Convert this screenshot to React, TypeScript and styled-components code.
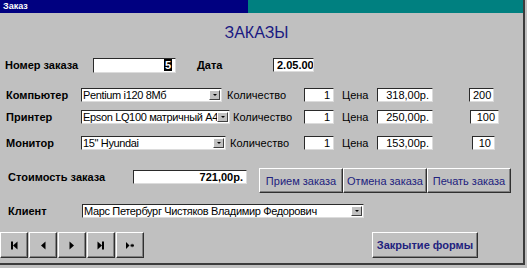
import React from 'react';
import styled, { createGlobalStyle } from 'styled-components';

const GlobalStyle = createGlobalStyle`
  html, body {
    margin: 0;
    padding: 0;
    background: #c0c0c0;
  }
  body {
    font-family: "Liberation Sans", Arial, sans-serif;
    font-size: 11px;
    color: #000;
  }
`;

const Window = styled.div`
  width: 525px;
  height: 265px;
  box-sizing: border-box;
  border-right: 2px solid #3c3c3c;
  border-bottom: 2px solid #3c3c3c;
  background: #c0c0c0;
  display: flex;
  flex-direction: column;
`;

const TitleBar = styled.div`
  height: 13px;
  background: linear-gradient(to right, #000080 0, #000080 248px, #008080 248px);
  color: #fff;
  font-weight: bold;
  font-size: 9px;
  line-height: 13px;
  padding-left: 3px;
`;

const Heading = styled.h1`
  margin: 11px 0 0;
  text-align: center;
  font-size: 16px;
  line-height: 18px;
  font-weight: normal;
  color: #1a1a82;
  padding-right: 10px;
`;

const Row = styled.div<{ $mt: number; $pl: number; $h: number }>`
  display: flex;
  align-items: center;
  margin-top: ${({ $mt }) => $mt}px;
  padding-left: ${({ $pl }) => $pl}px;
  height: ${({ $h }) => $h}px;
`;

const Label = styled.span<{ $w?: number; $ml?: number; $bold?: boolean }>`
  flex: 0 0 auto;
  width: ${({ $w }) => ($w ? `${$w}px` : 'auto')};
  margin-left: ${({ $ml }) => $ml || 0}px;
  font-weight: ${({ $bold }) => ($bold ? 'bold' : 'normal')};
  font-size: 11px;
  line-height: 14px;
  white-space: nowrap;
`;

const Field = styled.div<{ $w: number; $h?: number; $ml?: number; $bold?: boolean }>`
  flex: 0 0 auto;
  box-sizing: border-box;
  width: ${({ $w }) => $w}px;
  height: ${({ $h }) => $h || 14}px;
  margin-left: ${({ $ml }) => $ml || 0}px;
  background: #fff;
  border: 1px solid;
  border-color: #2a2a2a #dcdcdc #dcdcdc #2a2a2a;
  font-size: 11px;
  font-weight: ${({ $bold }) => ($bold ? 'bold' : 'normal')};
  line-height: ${({ $h }) => ($h || 14) - 2}px;
  text-align: right;
  padding: 0 3px;
  white-space: nowrap;
  overflow: hidden;
`;

const Caret = styled.span`
  background: #000;
  color: #fff;
  font-weight: bold;
  padding: 0 1px;
`;

const ComboCell = styled.div`
  flex: 0 0 223px;
  display: flex;
  align-items: center;
`;

const Combo = styled.div<{ $w: number }>`
  flex: 0 0 auto;
  box-sizing: border-box;
  width: ${({ $w }) => $w}px;
  height: 14px;
  background: #fff;
  border: 1px solid;
  border-color: #2a2a2a #dcdcdc #dcdcdc #2a2a2a;
  display: flex;
  align-items: center;
  padding-left: 1px;
`;

const ComboText = styled.span`
  flex: 1;
  min-width: 0;
  font-size: 11px;
  line-height: 12px;
  letter-spacing: -0.35px;
  white-space: nowrap;
  overflow: hidden;
`;

const DropButton = styled.span`
  flex: 0 0 11px;
  height: 10px;
  margin-right: 1px;
  box-sizing: border-box;
  background: #c0c0c0;
  border: 1px solid;
  border-color: #fff #404040 #404040 #fff;
  display: flex;
  align-items: center;
  justify-content: center;
`;

const Arrow = styled.span`
  width: 0;
  height: 0;
  border-left: 2px solid transparent;
  border-right: 2px solid transparent;
  border-top: 2px solid #000;
`;

const Button = styled.button<{ $w: number; $h: number; $bold?: boolean }>`
  flex: 0 0 auto;
  width: ${({ $w }) => $w}px;
  height: ${({ $h }) => $h}px;
  padding: 0;
  background: #c0c0c0;
  border: 1px solid;
  border-color: #fff #303030 #303030 #fff;
  box-shadow: inset -1px -1px #808080;
  font-family: "Liberation Sans", Arial, sans-serif;
  font-size: 11px;
  font-weight: ${({ $bold }) => ($bold ? 'bold' : 'normal')};
  color: #22227e;
  cursor: pointer;
  white-space: nowrap;
`;

const ButtonGroup = styled.div<{ $ml: number; $gap?: number }>`
  display: flex;
  margin-left: ${({ $ml }) => $ml}px;
  gap: ${({ $gap }) => $gap || 0}px;
`;

const CostBlock = styled.div`
  display: flex;
  align-self: flex-start;
  align-items: center;
  margin-top: 2px;
`;

const NavButton = styled.button`
  width: 28px;
  height: 26px;
  padding: 0;
  background: #c0c0c0;
  border: 1px solid;
  border-color: #fff #303030 #303030 #fff;
  box-shadow: inset -1px -1px #808080;
  display: flex;
  align-items: center;
  justify-content: center;
  cursor: pointer;
`;

type NavKind = 'first' | 'prev' | 'next' | 'last' | 'new';

const NavIcon: React.FC<{ kind: NavKind }> = ({ kind }) => {
  if (kind === 'first')
    return (
      <svg width="8" height="9" viewBox="0 0 8 9">
        <rect x="1" y="0.5" width="2" height="8" fill="#000" />
        <polygon points="7.5,0.5 3,4.5 7.5,8.5" fill="#000" />
      </svg>
    );
  if (kind === 'prev')
    return (
      <svg width="8" height="9" viewBox="0 0 8 9">
        <polygon points="6.5,0.5 2,4.5 6.5,8.5" fill="#000" />
      </svg>
    );
  if (kind === 'next')
    return (
      <svg width="8" height="9" viewBox="0 0 8 9">
        <polygon points="1.5,0.5 6,4.5 1.5,8.5" fill="#000" />
      </svg>
    );
  if (kind === 'last')
    return (
      <svg width="8" height="9" viewBox="0 0 8 9">
        <polygon points="0.5,0.5 5,4.5 0.5,8.5" fill="#000" />
        <rect x="5" y="0.5" width="2" height="8" fill="#000" />
      </svg>
    );
  return (
    <svg width="10" height="9" viewBox="0 0 10 9">
      <polygon points="1,1 4.5,4.5 1,8" fill="#000" />
      <path d="M5.5 4.5h3.5M7.2 2.8v3.4M6 3.3l2.4 2.4M8.4 3.3L6 5.7" stroke="#000" strokeWidth="0.9" />
    </svg>
  );
};

const products = [
  { label: 'Компьютер', item: 'Pentium i120 8Мб', combo: 141, ml: 5, price: '318,00р.', stock: '200', sl: 36, sw: 25 },
  { label: 'Принтер', item: 'Epson LQ100 матричный A4', combo: 149, ml: 3, price: '250,00р.', stock: '100', sl: 37, sw: 29 },
  { label: 'Монитор', item: '15" Hyundai', combo: 145, ml: 4, price: '153,00р.', stock: '10', sl: 39, sw: 23 },
];

const rowGaps = [13, 6, 10];

const ComboBox: React.FC<{ w: number; text: string }> = ({ w, text }) => (
  <Combo $w={w}>
    <ComboText>{text}</ComboText>
    <DropButton>
      <Arrow />
    </DropButton>
  </Combo>
);

export default function App() {
  return (
    <>
      <GlobalStyle />
      <Window>
        <TitleBar>Заказ</TitleBar>
        <Heading>ЗАКАЗЫ</Heading>

        <Row $mt={14} $pl={5} $h={18}>
          <Label $w={88} $bold>Номер заказа</Label>
          <Field $w={83} $h={15}>
            <Caret>5</Caret>
          </Field>
          <Label $ml={21} $w={76} $bold>Дата</Label>
          <Field $w={41} $h={14} $bold>2.05.00</Field>
        </Row>

        {products.map((p, i) => (
          <Row key={p.label} $mt={rowGaps[i]} $pl={6} $h={16}>
            <Label $w={75} $bold>{p.label}</Label>
            <ComboCell>
              <ComboBox w={p.combo} text={p.item} />
              <Label $ml={p.ml}>Количество</Label>
            </ComboCell>
            <Field $w={30}>1</Field>
            <Label $ml={8} $w={35}>Цена</Label>
            <Field $w={56}>{p.price}</Field>
            <Field $w={p.sw} $ml={p.sl}>{p.stock}</Field>
          </Row>
        ))}

        <Row $mt={17} $pl={8} $h={25}>
          <CostBlock>
            <Label $w={125} $bold>Стоимость заказа</Label>
            <Field $w={114} $bold>721,00р.</Field>
          </CostBlock>
          <ButtonGroup $ml={12}>
            <Button $w={84} $h={25}>Прием заказа</Button>
            <Button $w={84} $h={25}>Отмена заказа</Button>
            <Button $w={84} $h={25}>Печать заказа</Button>
          </ButtonGroup>
        </Row>

        <Row $mt={10} $pl={8} $h={15}>
          <Label $w={74} $bold>Клиент</Label>
          <ComboBox w={282} text="Марс Петербург Чистяков Владимир Федорович" />
        </Row>

        <Row $mt={14} $pl={0} $h={26}>
          <ButtonGroup $ml={0} $gap={1}>
            {(['first', 'prev', 'next', 'last', 'new'] as NavKind[]).map((k) => (
              <NavButton key={k}>
                <NavIcon kind={k} />
              </NavButton>
            ))}
          </ButtonGroup>
          <ButtonGroup $ml={228}>
            <Button $w={106} $h={26} $bold>Закрытие формы</Button>
          </ButtonGroup>
        </Row>
      </Window>
    </>
  );
}
